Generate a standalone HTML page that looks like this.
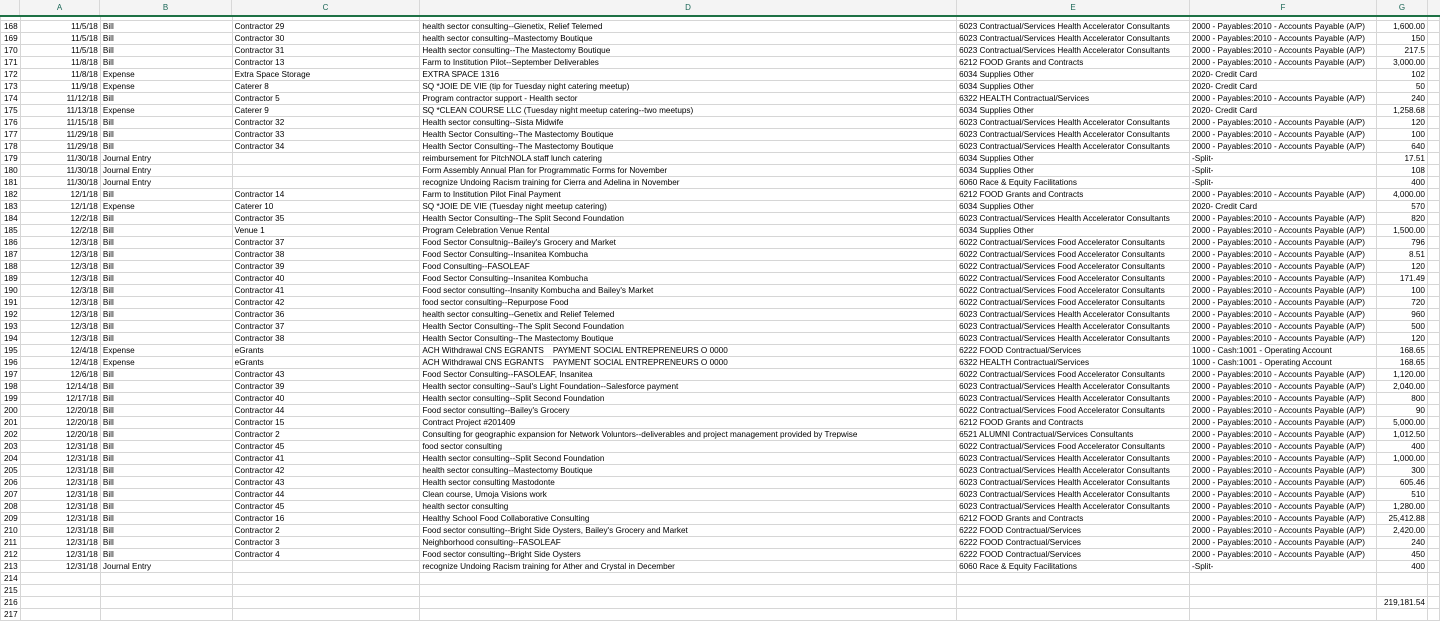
<!DOCTYPE html>
<html><head><meta charset="utf-8"><style>
html,body{margin:0;padding:0;width:1440px;height:622px;overflow:hidden;background:#fff;font-family:"Liberation Sans",Arial,sans-serif;}
.hdr{position:absolute;left:0;top:0;width:1440px;height:15px;background:#f4f4f4;border-bottom:2px solid #1e7145;z-index:2;}
.hdr div{position:absolute;top:0;height:15px;line-height:15px;font-size:8px;color:#1a6656;text-align:center;border-right:1px solid #d8d8d8;box-sizing:border-box;}
table{position:absolute;left:0;top:8px;border-collapse:collapse;table-layout:fixed;font-size:8.2px;color:#000;}
td{height:11px;padding:0 2px;border:1px solid #d6d6d6;white-space:nowrap;overflow:hidden;line-height:11px;}
td:first-child{background:#fff;padding:0 0 0 3px;color:#000;}
td.r{text-align:right;}
</style></head><body>
<div class="hdr">
<div style="left:0;width:20px"></div>
<div style="left:20px;width:80px">A</div>
<div style="left:100px;width:132px">B</div>
<div style="left:232px;width:188px">C</div>
<div style="left:420px;width:537px">D</div>
<div style="left:957px;width:233px">E</div>
<div style="left:1190px;width:187px">F</div>
<div style="left:1377px;width:51px">G</div>
</div>
<table>
<colgroup><col style="width:20px"><col style="width:80px"><col style="width:132px"><col style="width:188px"><col style="width:537px"><col style="width:233px"><col style="width:187px"><col style="width:51px"><col style="width:12px"></colgroup>
<tr><td>167</td><td class="r"></td><td></td><td></td><td></td><td></td><td></td><td class="r"></td><td></td></tr>
<tr><td>168</td><td class="r">11/5/18</td><td>Bill</td><td>Contractor 29</td><td>health sector consulting--Gienetix, Relief Telemed</td><td>6023 Contractual/Services  Health Accelerator Consultants</td><td>2000 - Payables:2010 - Accounts Payable (A/P)</td><td class="r">1,600.00</td><td></td></tr>
<tr><td>169</td><td class="r">11/5/18</td><td>Bill</td><td>Contractor 30</td><td>health sector consulting--Mastectomy Boutique</td><td>6023 Contractual/Services  Health Accelerator Consultants</td><td>2000 - Payables:2010 - Accounts Payable (A/P)</td><td class="r">150</td><td></td></tr>
<tr><td>170</td><td class="r">11/5/18</td><td>Bill</td><td>Contractor 31</td><td>Health sector consulting--The Mastectomy Boutique</td><td>6023 Contractual/Services  Health Accelerator Consultants</td><td>2000 - Payables:2010 - Accounts Payable (A/P)</td><td class="r">217.5</td><td></td></tr>
<tr><td>171</td><td class="r">11/8/18</td><td>Bill</td><td>Contractor 13</td><td>Farm to Institution Pilot--September Deliverables</td><td>6212 FOOD  Grants and Contracts</td><td>2000 - Payables:2010 - Accounts Payable (A/P)</td><td class="r">3,000.00</td><td></td></tr>
<tr><td>172</td><td class="r">11/8/18</td><td>Expense</td><td>Extra Space Storage</td><td>EXTRA SPACE 1316</td><td>6034 Supplies  Other</td><td>2020- Credit Card</td><td class="r">102</td><td></td></tr>
<tr><td>173</td><td class="r">11/9/18</td><td>Expense</td><td>Caterer 8</td><td>SQ *JOIE DE VIE (tip for Tuesday night catering meetup)</td><td>6034 Supplies  Other</td><td>2020- Credit Card</td><td class="r">50</td><td></td></tr>
<tr><td>174</td><td class="r">11/12/18</td><td>Bill</td><td>Contractor 5</td><td>Program contractor support - Health sector</td><td>6322 HEALTH  Contractual/Services</td><td>2000 - Payables:2010 - Accounts Payable (A/P)</td><td class="r">240</td><td></td></tr>
<tr><td>175</td><td class="r">11/13/18</td><td>Expense</td><td>Caterer 9</td><td>SQ *CLEAN COURSE LLC (Tuesday night meetup catering--two meetups)</td><td>6034 Supplies  Other</td><td>2020- Credit Card</td><td class="r">1,258.68</td><td></td></tr>
<tr><td>176</td><td class="r">11/15/18</td><td>Bill</td><td>Contractor 32</td><td>Health sector consulting--Sista Midwife</td><td>6023 Contractual/Services  Health Accelerator Consultants</td><td>2000 - Payables:2010 - Accounts Payable (A/P)</td><td class="r">120</td><td></td></tr>
<tr><td>177</td><td class="r">11/29/18</td><td>Bill</td><td>Contractor 33</td><td>Health Sector Consulting--The Mastectomy Boutique</td><td>6023 Contractual/Services  Health Accelerator Consultants</td><td>2000 - Payables:2010 - Accounts Payable (A/P)</td><td class="r">100</td><td></td></tr>
<tr><td>178</td><td class="r">11/29/18</td><td>Bill</td><td>Contractor 34</td><td>Health Sector Consulting--The Mastectomy Boutique</td><td>6023 Contractual/Services  Health Accelerator Consultants</td><td>2000 - Payables:2010 - Accounts Payable (A/P)</td><td class="r">640</td><td></td></tr>
<tr><td>179</td><td class="r">11/30/18</td><td>Journal Entry</td><td></td><td>reimbursement for PitchNOLA staff lunch catering</td><td>6034 Supplies  Other</td><td>-Split-</td><td class="r">17.51</td><td></td></tr>
<tr><td>180</td><td class="r">11/30/18</td><td>Journal Entry</td><td></td><td>Form Assembly Annual Plan for Programmatic Forms for November</td><td>6034 Supplies  Other</td><td>-Split-</td><td class="r">108</td><td></td></tr>
<tr><td>181</td><td class="r">11/30/18</td><td>Journal Entry</td><td></td><td>recognize Undoing Racism training for Cierra and Adelina in November</td><td>6060 Race &amp; Equity Facilitations</td><td>-Split-</td><td class="r">400</td><td></td></tr>
<tr><td>182</td><td class="r">12/1/18</td><td>Bill</td><td>Contractor 14</td><td>Farm to Institution Pilot Final Payment</td><td>6212 FOOD  Grants and Contracts</td><td>2000 - Payables:2010 - Accounts Payable (A/P)</td><td class="r">4,000.00</td><td></td></tr>
<tr><td>183</td><td class="r">12/1/18</td><td>Expense</td><td>Caterer 10</td><td>SQ *JOIE DE VIE (Tuesday night meetup catering)</td><td>6034 Supplies  Other</td><td>2020- Credit Card</td><td class="r">570</td><td></td></tr>
<tr><td>184</td><td class="r">12/2/18</td><td>Bill</td><td>Contractor 35</td><td>Health Sector Consulting--The Split Second Foundation</td><td>6023 Contractual/Services  Health Accelerator Consultants</td><td>2000 - Payables:2010 - Accounts Payable (A/P)</td><td class="r">820</td><td></td></tr>
<tr><td>185</td><td class="r">12/2/18</td><td>Bill</td><td>Venue 1</td><td>Program Celebration Venue Rental</td><td>6034 Supplies  Other</td><td>2000 - Payables:2010 - Accounts Payable (A/P)</td><td class="r">1,500.00</td><td></td></tr>
<tr><td>186</td><td class="r">12/3/18</td><td>Bill</td><td>Contractor 37</td><td>Food Sector Consultnig--Bailey's Grocery and Market</td><td>6022 Contractual/Services  Food Accelerator Consultants</td><td>2000 - Payables:2010 - Accounts Payable (A/P)</td><td class="r">796</td><td></td></tr>
<tr><td>187</td><td class="r">12/3/18</td><td>Bill</td><td>Contractor 38</td><td>Food Sector Consulting--Insanitea Kombucha</td><td>6022 Contractual/Services  Food Accelerator Consultants</td><td>2000 - Payables:2010 - Accounts Payable (A/P)</td><td class="r">8.51</td><td></td></tr>
<tr><td>188</td><td class="r">12/3/18</td><td>Bill</td><td>Contractor 39</td><td>Food Consulting--FASOLEAF</td><td>6022 Contractual/Services  Food Accelerator Consultants</td><td>2000 - Payables:2010 - Accounts Payable (A/P)</td><td class="r">120</td><td></td></tr>
<tr><td>189</td><td class="r">12/3/18</td><td>Bill</td><td>Contractor 40</td><td>Food Sector Consulting--Insanitea Kombucha</td><td>6022 Contractual/Services  Food Accelerator Consultants</td><td>2000 - Payables:2010 - Accounts Payable (A/P)</td><td class="r">171.49</td><td></td></tr>
<tr><td>190</td><td class="r">12/3/18</td><td>Bill</td><td>Contractor 41</td><td>Food sector consulting--Insanity Kombucha and Bailey's Market</td><td>6022 Contractual/Services  Food Accelerator Consultants</td><td>2000 - Payables:2010 - Accounts Payable (A/P)</td><td class="r">100</td><td></td></tr>
<tr><td>191</td><td class="r">12/3/18</td><td>Bill</td><td>Contractor 42</td><td>food sector consulting--Repurpose Food</td><td>6022 Contractual/Services  Food Accelerator Consultants</td><td>2000 - Payables:2010 - Accounts Payable (A/P)</td><td class="r">720</td><td></td></tr>
<tr><td>192</td><td class="r">12/3/18</td><td>Bill</td><td>Contractor 36</td><td>health sector consulting--Genetix and Relief Telemed</td><td>6023 Contractual/Services  Health Accelerator Consultants</td><td>2000 - Payables:2010 - Accounts Payable (A/P)</td><td class="r">960</td><td></td></tr>
<tr><td>193</td><td class="r">12/3/18</td><td>Bill</td><td>Contractor 37</td><td>Health Sector Consulting--The Split Second Foundation</td><td>6023 Contractual/Services  Health Accelerator Consultants</td><td>2000 - Payables:2010 - Accounts Payable (A/P)</td><td class="r">500</td><td></td></tr>
<tr><td>194</td><td class="r">12/3/18</td><td>Bill</td><td>Contractor 38</td><td>Health Sector Consulting--The Mastectomy Boutique</td><td>6023 Contractual/Services  Health Accelerator Consultants</td><td>2000 - Payables:2010 - Accounts Payable (A/P)</td><td class="r">120</td><td></td></tr>
<tr><td>195</td><td class="r">12/4/18</td><td>Expense</td><td>eGrants</td><td>ACH Withdrawal CNS EGRANTS &nbsp;&nbsp;&nbsp;PAYMENT SOCIAL ENTREPRENEURS O 0000</td><td>6222 FOOD  Contractual/Services</td><td>1000 - Cash:1001 - Operating Account</td><td class="r">168.65</td><td></td></tr>
<tr><td>196</td><td class="r">12/4/18</td><td>Expense</td><td>eGrants</td><td>ACH Withdrawal CNS EGRANTS &nbsp;&nbsp;&nbsp;PAYMENT SOCIAL ENTREPRENEURS O 0000</td><td>6322 HEALTH  Contractual/Services</td><td>1000 - Cash:1001 - Operating Account</td><td class="r">168.65</td><td></td></tr>
<tr><td>197</td><td class="r">12/6/18</td><td>Bill</td><td>Contractor 43</td><td>Food Sector Consulting--FASOLEAF, Insanitea</td><td>6022 Contractual/Services  Food Accelerator Consultants</td><td>2000 - Payables:2010 - Accounts Payable (A/P)</td><td class="r">1,120.00</td><td></td></tr>
<tr><td>198</td><td class="r">12/14/18</td><td>Bill</td><td>Contractor 39</td><td>Health sector consulting--Saul's Light Foundation--Salesforce payment</td><td>6023 Contractual/Services  Health Accelerator Consultants</td><td>2000 - Payables:2010 - Accounts Payable (A/P)</td><td class="r">2,040.00</td><td></td></tr>
<tr><td>199</td><td class="r">12/17/18</td><td>Bill</td><td>Contractor 40</td><td>Health sector consulting--Split Second Foundation</td><td>6023 Contractual/Services  Health Accelerator Consultants</td><td>2000 - Payables:2010 - Accounts Payable (A/P)</td><td class="r">800</td><td></td></tr>
<tr><td>200</td><td class="r">12/20/18</td><td>Bill</td><td>Contractor 44</td><td>Food sector consulting--Bailey's Grocery</td><td>6022 Contractual/Services  Food Accelerator Consultants</td><td>2000 - Payables:2010 - Accounts Payable (A/P)</td><td class="r">90</td><td></td></tr>
<tr><td>201</td><td class="r">12/20/18</td><td>Bill</td><td>Contractor 15</td><td>Contract Project #201409</td><td>6212 FOOD  Grants and Contracts</td><td>2000 - Payables:2010 - Accounts Payable (A/P)</td><td class="r">5,000.00</td><td></td></tr>
<tr><td>202</td><td class="r">12/20/18</td><td>Bill</td><td>Contractor 2</td><td>Consulting for geographic expansion for Network Voluntors--deliverables and project management provided by Trepwise</td><td>6521 ALUMNI  Contractual/Services  Consultants</td><td>2000 - Payables:2010 - Accounts Payable (A/P)</td><td class="r">1,012.50</td><td></td></tr>
<tr><td>203</td><td class="r">12/31/18</td><td>Bill</td><td>Contractor 45</td><td>food sector consulting</td><td>6022 Contractual/Services  Food Accelerator Consultants</td><td>2000 - Payables:2010 - Accounts Payable (A/P)</td><td class="r">400</td><td></td></tr>
<tr><td>204</td><td class="r">12/31/18</td><td>Bill</td><td>Contractor 41</td><td>Health sector consulting--Split Second Foundation</td><td>6023 Contractual/Services  Health Accelerator Consultants</td><td>2000 - Payables:2010 - Accounts Payable (A/P)</td><td class="r">1,000.00</td><td></td></tr>
<tr><td>205</td><td class="r">12/31/18</td><td>Bill</td><td>Contractor 42</td><td>health sector consulting--Mastectomy Boutique</td><td>6023 Contractual/Services  Health Accelerator Consultants</td><td>2000 - Payables:2010 - Accounts Payable (A/P)</td><td class="r">300</td><td></td></tr>
<tr><td>206</td><td class="r">12/31/18</td><td>Bill</td><td>Contractor 43</td><td>Health sector consulting Mastodonte</td><td>6023 Contractual/Services  Health Accelerator Consultants</td><td>2000 - Payables:2010 - Accounts Payable (A/P)</td><td class="r">605.46</td><td></td></tr>
<tr><td>207</td><td class="r">12/31/18</td><td>Bill</td><td>Contractor 44</td><td>Clean course, Umoja Visions work</td><td>6023 Contractual/Services  Health Accelerator Consultants</td><td>2000 - Payables:2010 - Accounts Payable (A/P)</td><td class="r">510</td><td></td></tr>
<tr><td>208</td><td class="r">12/31/18</td><td>Bill</td><td>Contractor 45</td><td>health sector consulting</td><td>6023 Contractual/Services  Health Accelerator Consultants</td><td>2000 - Payables:2010 - Accounts Payable (A/P)</td><td class="r">1,280.00</td><td></td></tr>
<tr><td>209</td><td class="r">12/31/18</td><td>Bill</td><td>Contractor 16</td><td>Healthy School Food Collaborative Consulting</td><td>6212 FOOD  Grants and Contracts</td><td>2000 - Payables:2010 - Accounts Payable (A/P)</td><td class="r">25,412.88</td><td></td></tr>
<tr><td>210</td><td class="r">12/31/18</td><td>Bill</td><td>Contractor 2</td><td>Food sector consulting--Bright Side Oysters, Bailey's Grocery and Market</td><td>6222 FOOD  Contractual/Services</td><td>2000 - Payables:2010 - Accounts Payable (A/P)</td><td class="r">2,420.00</td><td></td></tr>
<tr><td>211</td><td class="r">12/31/18</td><td>Bill</td><td>Contractor 3</td><td>Neighborhood consulting--FASOLEAF</td><td>6222 FOOD  Contractual/Services</td><td>2000 - Payables:2010 - Accounts Payable (A/P)</td><td class="r">240</td><td></td></tr>
<tr><td>212</td><td class="r">12/31/18</td><td>Bill</td><td>Contractor 4</td><td>Food sector consulting--Bright Side Oysters</td><td>6222 FOOD  Contractual/Services</td><td>2000 - Payables:2010 - Accounts Payable (A/P)</td><td class="r">450</td><td></td></tr>
<tr><td>213</td><td class="r">12/31/18</td><td>Journal Entry</td><td></td><td>recognize Undoing Racism training for Ather and Crystal in December</td><td>6060 Race &amp; Equity Facilitations</td><td>-Split-</td><td class="r">400</td><td></td></tr>
<tr><td>214</td><td></td><td></td><td></td><td></td><td></td><td></td><td></td><td></td></tr>
<tr><td>215</td><td></td><td></td><td></td><td></td><td></td><td></td><td></td><td></td></tr>
<tr><td>216</td><td></td><td></td><td></td><td></td><td></td><td></td><td class="r">219,181.54</td><td></td></tr>
<tr><td>217</td><td></td><td></td><td></td><td></td><td></td><td></td><td></td><td></td></tr>
</table>
</body></html>
